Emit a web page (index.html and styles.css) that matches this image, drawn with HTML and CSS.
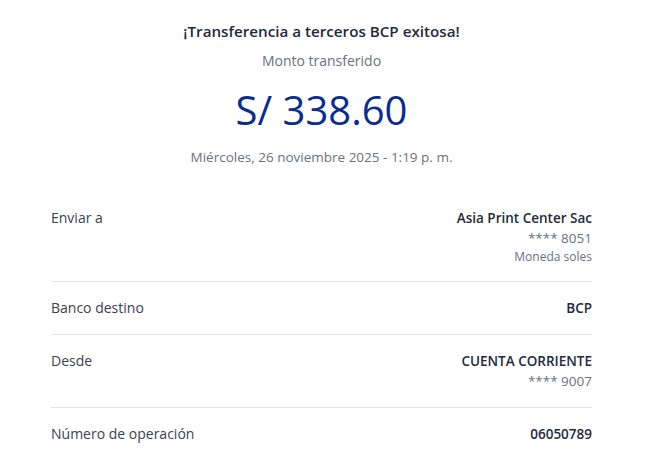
FILE: index.html
```html
<!DOCTYPE html>
<html lang="es">
<head>
<meta charset="utf-8">
<link rel="stylesheet" href="styles.css">
</head>
<body>
<main class="receipt">
  <header class="summary">
    <h1 class="title">¡Transferencia a terceros BCP exitosa!</h1>
    <p class="label">Monto transferido</p>
    <p class="amount">S/ 338.60</p>
    <p class="date">Miércoles, 26 noviembre 2025 - 1:19 p. m.</p>
  </header>
  <section class="details">
    <div class="row">
      <span class="key">Enviar a</span>
      <div class="val">
        <span class="strong">Asia Print Center Sac</span>
        <span class="sub">**** 8051</span>
        <span class="note">Moneda soles</span>
      </div>
    </div>
    <div class="row">
      <span class="key">Banco destino</span>
      <div class="val"><span class="strong">BCP</span></div>
    </div>
    <div class="row">
      <span class="key">Desde</span>
      <div class="val">
        <span class="strong">CUENTA CORRIENTE</span>
        <span class="sub">**** 9007</span>
      </div>
    </div>
    <div class="row last">
      <span class="key">Número de operación</span>
      <div class="val"><span class="strong">06050789</span></div>
    </div>
  </section>
</main>
</body>
</html>
```
FILE: styles.css
```css
* { box-sizing: border-box; }
html, body { margin: 0; padding: 0; background: #fff; }
body {
  font-family: "Open Sans", "Noto Sans", sans-serif;
  color: #2b3340;
}
.receipt {
  width: 660px;
  padding: 0 68px 0 51px;
}
.summary {
  display: flex;
  flex-direction: column;
  align-items: center;
}
.summary p, .summary h1 { margin: 0; }
.title {
  font-size: 15.2px;
  font-weight: 600;
  color: #1f2a3b;
  margin-top: 20px !important;
  line-height: 22px;
}
.label {
  font-size: 14px;
  color: #6a7180;
  margin-top: 9px !important;
  line-height: 20px;
}
.amount {
  font-size: 40px;
  color: #0d2d8c;
  line-height: 50px;
  margin-top: 14px !important;
}
.date {
  font-size: 13.5px;
  color: #6a7180;
  margin-top: 12px !important;
  line-height: 20px;
}
.details { margin-top: 25px; }
.row {
  display: flex;
  justify-content: space-between;
  align-items: flex-start;
  border-bottom: 1px solid #e3e5e8;
  padding: 16px 0 16px;
}
.row.last { border-bottom: none; }
.key {
  font-size: 14px;
  color: #3b4250;
  line-height: 20px;
}
.val {
  display: flex;
  flex-direction: column;
  align-items: flex-end;
}
.strong {
  font-size: 13.5px;
  font-weight: 600;
  color: #1f2a3b;
  line-height: 20px;
}
.sub {
  font-size: 13.5px;
  color: #6a7180;
  line-height: 20px;
}
.note {
  font-size: 12px;
  color: #6a7180;
  line-height: 17px;
}
```
